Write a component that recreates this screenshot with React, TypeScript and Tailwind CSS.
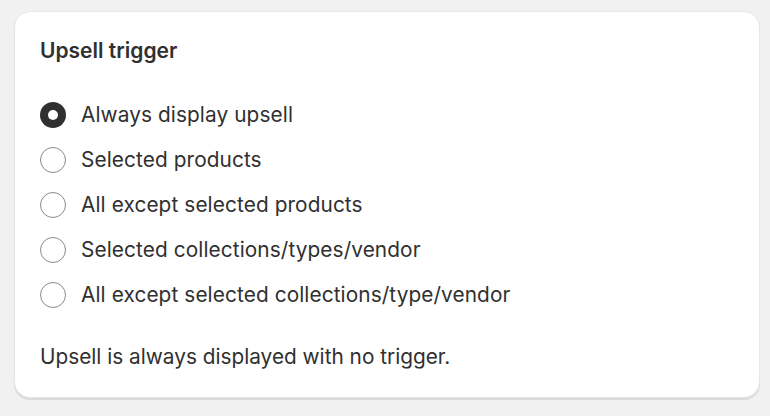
import React from "react";

const options = [
  "Always display upsell",
  "Selected products",
  "All except selected products",
  "Selected collections/types/vendor",
  "All except selected collections/type/vendor",
];

export default function App() {
  return (
    <div
      className="w-[770px] h-[416px] bg-[#f1f1f1] pt-[11px] pl-[14px]"
      style={{ fontFamily: "Inter, 'Noto Sans', sans-serif" }}
    >
      <div className="w-[746px] h-[387px] bg-white rounded-[16px] border border-[#e6e6e6] shadow-[0_2px_1px_rgba(0,0,0,0.10)] px-[25px] pt-[24px] text-[#303030]">
        <div className="h-[30px] flex items-center text-[21px] font-semibold">Upsell trigger</div>
        <div className="mt-[26px] flex flex-col">
          {options.map((o, i) => (
            <div key={o} className="h-[45px] flex items-center gap-[15px]">
              {i === 0 ? (
                <span className="w-[26px] h-[26px] rounded-full bg-[#303030] flex items-center justify-center">
                  <span className="w-[10px] h-[10px] rounded-full bg-white" />
                </span>
              ) : (
                <span className="w-[26px] h-[26px] rounded-full border-[1.5px] border-[#8a8a8a] bg-white" />
              )}
              <span className="text-[20.8px] tracking-[0.1px]">{o}</span>
            </div>
          ))}
        </div>
        <div className="mt-[25px] h-[30px] flex items-center text-[20.8px]">
          Upsell is always displayed with no trigger.
        </div>
      </div>
    </div>
  );
}
